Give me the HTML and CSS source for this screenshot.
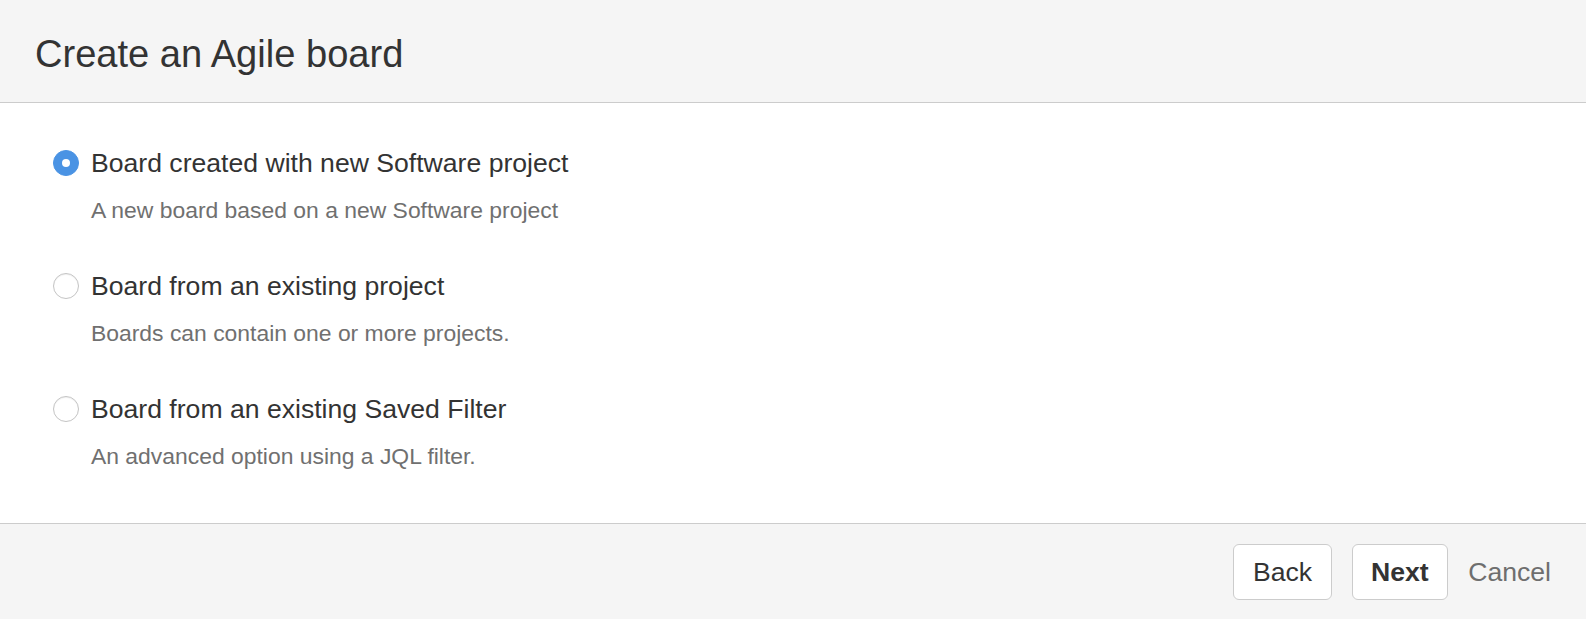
FILE: index.html
```html
<!DOCTYPE html>
<html lang="en">
<head>
<meta charset="utf-8">
<title>Create an Agile board</title>
<link rel="stylesheet" href="styles.css">
</head>
<body>
<div class="dialog">
  <header class="dialog-header">
    <h1 class="dialog-title">Create an Agile board</h1>
  </header>
  <main class="dialog-content">
    <label class="option">
      <input class="radio" type="radio" name="board" checked>
      <span class="option-text">
        <span class="option-label">Board created with new Software project</span>
        <span class="option-desc">A new board based on a new Software project</span>
      </span>
    </label>
    <label class="option">
      <input class="radio" type="radio" name="board">
      <span class="option-text">
        <span class="option-label">Board from an existing project</span>
        <span class="option-desc">Boards can contain one or more projects.</span>
      </span>
    </label>
    <label class="option">
      <input class="radio" type="radio" name="board">
      <span class="option-text">
        <span class="option-label">Board from an existing Saved Filter</span>
        <span class="option-desc">An advanced option using a JQL filter.</span>
      </span>
    </label>
  </main>
  <footer class="dialog-footer">
    <button class="btn" type="button">Back</button>
    <button class="btn btn-primary" type="button">Next</button>
    <a class="cancel-link" href="#">Cancel</a>
  </footer>
</div>
</body>
</html>
```
FILE: styles.css
```css
html, body {
  margin: 0;
  padding: 0;
  height: 100%;
  background: #ffffff;
}

body {
  font-family: "Liberation Sans", Arial, Helvetica, sans-serif;
  color: #333333;
}

.dialog {
  display: flex;
  flex-direction: column;
  height: 619px;
  width: 100%;
}

.dialog-header {
  background: #f5f5f5;
  border-bottom: 1px solid #cccccc;
  height: 102px;
  box-sizing: content-box;
  padding: 0 35px;
}

.dialog-title {
  margin: 0;
  padding-top: 31.5px;
  font-size: 38.1px;
  line-height: 45px;
  font-weight: normal;
  color: #333333;
}

.dialog-content {
  flex: 1;
  padding: 41.5px 53px 0;
  display: flex;
  flex-direction: column;
  gap: 40.5px;
}

.option {
  display: flex;
  align-items: flex-start;
  gap: 12px;
  cursor: pointer;
}

.radio {
  appearance: none;
  -webkit-appearance: none;
  margin: 5px 0 0 0;
  width: 26px;
  height: 26px;
  border-radius: 50%;
  border: 1px solid #c4c4c4;
  background: #ffffff;
  box-shadow: inset 0 1px 1px rgba(0, 0, 0, 0.06);
  box-sizing: border-box;
  flex: none;
  position: relative;
}

.radio:checked {
  background: #4a93e4;
  border-color: #4a93e4;
  box-shadow: none;
}

.radio:checked::after {
  content: "";
  position: absolute;
  left: 50%;
  top: 50%;
  width: 8px;
  height: 8px;
  margin: -4px 0 0 -4px;
  border-radius: 50%;
  background: #ffffff;
}

.option-text {
  display: flex;
  flex-direction: column;
}

.option-label {
  font-size: 26.6px;
  line-height: 37.6px;
  color: #333333;
}

.option-desc {
  margin-top: 11.5px;
  font-size: 22.9px;
  line-height: 33.8px;
  color: #707070;
}

.dialog-footer {
  background: #f5f5f5;
  border-top: 1px solid #cccccc;
  height: 96px;
  box-sizing: border-box;
  flex: none;
  padding: 20px 35px 20px;
  display: flex;
  justify-content: flex-end;
  align-items: center;
  gap: 20px;
}

.btn {
  font-family: inherit;
  font-size: 26.6px;
  line-height: 36px;
  height: 56px;
  box-sizing: border-box;
  padding: 9px 18.5px;
  border: 1px solid #cccccc;
  border-radius: 6px;
  background: #ffffff;
  color: #333333;
  cursor: pointer;
}

.btn-primary {
  font-weight: bold;
}

.cancel-link {
  font-size: 26.6px;
  line-height: 36px;
  color: #6e6e6e;
  text-decoration: none;
}
```
